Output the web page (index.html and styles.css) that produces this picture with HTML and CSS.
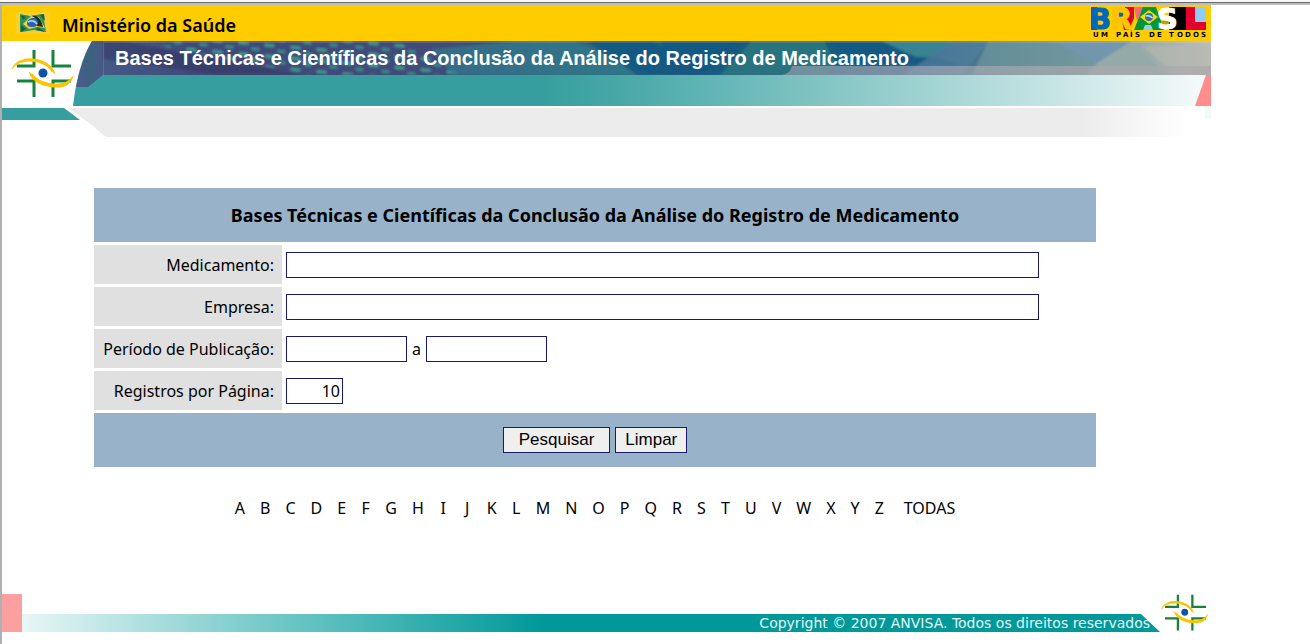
FILE: index.html
```html
<!DOCTYPE html>
<html lang="pt-BR">
<head>
<meta charset="utf-8">
<title>Bases Técnicas e Científicas</title>
<link rel="stylesheet" href="styles.css">
</head>
<body>
<div class="frame-edge"></div>
<div class="frame">
<div class="page">
  <header>
    <div class="ministry">
      <svg class="flag" viewBox="0 0 34 22" aria-hidden="true">
        <path fill="#f8d568" opacity=".4" d="M0 0h34v22H0z"/>
        <path fill="#2f9455" d="M4 2l10 2 13-2 2 12 1 6-12-2-12 2L4 20z"/>
        <path fill="#1d5f43" d="M5 3l5 2-3 3zM5 13l5 4-5 3zM24 3l4-1 1 7zM22 15l7 5-9-2z"/>
        <path fill="#f3d13d" d="M7 12l8-8 8 1 6 11-8-1-8 2z"/>
        <path fill="#1b2f22" d="M16 4c6-1 9 3 11 11l-6-1c1-5-1-8-5-10z"/>
        <path fill="#2862b0" d="M11 12c0-4 3-6 6-6s5 2 5 5-3 4-6 4-5-1-5-3z"/>
        <path fill="none" stroke="#a8cff0" stroke-width="1.6" d="M12 10c4-2 7-1 9 2"/>
      </svg>
      <span class="ministry-name">Ministério da Saúde</span>
      <svg class="brasil" viewBox="0 0 116 32" role="img" aria-label="Brasil, um país de todos">
        <path fill="#0067b9" d="M0 0h6v23H0zM26 1h9v11h-9z"/>
        <path fill="#e4002b" d="M34 0h9v11l-5 12h-5l-2-9h4z"/>
        <path fill="#f06a78" d="M43 0h10l-7 14z"/>
        <path fill="#000" d="M78 0h17v23H78z"/>
        <path fill="#8fcdf2" d="M52 16h10v7H52z"/>
        <g class="brasil-letters">
          <text x="-2" y="22" fill="#0067b9" stroke="#0067b9">B</text>
          <text x="19" y="22" fill="#ffc400" stroke="#ffc400">R</text>
        </g>
        <path fill="#e4002b" d="M95 0h9v23h-9zM95 15h20v8H95z"/>
        <path fill="#8fcdf2" d="M104 0h11v15h-11z"/>
        <path fill="#009739" d="M52 0h13l8 23H62l-2-5h-6l-2 5h-9z"/>
        <path fill="#ffd600" d="M49 10l9-7 9 7-9 7z"/>
        <circle cx="58" cy="10" r="4" fill="#2d6fb5"/>
        <path stroke="#c7e2f4" stroke-width="1.3" fill="none" d="M54.500 9q4-1 7 2"/>
        <path fill="#c49b00" d="M70 14h8v4h-8z"/>
        <text class="brasil-letters" x="66" y="22" fill="#fff" stroke="#fff">S</text>
        <text class="brasil-tag" x="2 10 25 32 39 44 58 66 78 86 94 102 110" y="30">UMPAÍSDETODOS</text>
      </svg>
    </div>
    <div class="banner">
      <svg class="banner-art" viewBox="0 0 1209 96" preserveAspectRatio="none" aria-hidden="true">
        <defs>
          <linearGradient id="photo" gradientUnits="userSpaceOnUse" x1="75" y1="0" x2="1209" y2="0">
            <stop offset="0" stop-color="#485e8a"/><stop offset=".1" stop-color="#3f4a78"/>
            <stop offset=".33" stop-color="#414b78"/><stop offset=".42" stop-color="#35617d"/>
            <stop offset=".5" stop-color="#26677e"/><stop offset=".75" stop-color="#2e6689"/>
            <stop offset=".85" stop-color="#648d99"/><stop offset="1" stop-color="#bdbdb5"/>
          </linearGradient>
          <linearGradient id="teal" gradientUnits="userSpaceOnUse" x1="540" y1="0" x2="1209" y2="0">
            <stop offset="0" stop-color="#369e9e"/><stop offset=".15" stop-color="#4eabab"/>
            <stop offset=".5" stop-color="#92cccb"/><stop offset=".75" stop-color="#c3e3e3"/>
            <stop offset="1" stop-color="#f7fbfb"/>
          </linearGradient>
          <linearGradient id="grey" gradientUnits="userSpaceOnUse" x1="1080" y1="0" x2="1185" y2="0">
            <stop offset="0" stop-color="#ececec"/><stop offset="1" stop-color="#fff"/>
          </linearGradient>
          <linearGradient id="haze" x1="0" y1="0" x2="1" y2="0">
            <stop offset="0" stop-color="#a9a9ba" stop-opacity=".55"/><stop offset="1" stop-color="#aaa" stop-opacity=".75"/>
          </linearGradient>
          <pattern id="dots" width="26" height="11" patternUnits="userSpaceOnUse" patternTransform="skewY(5)">
            <rect x="2" y="1" width="11" height="4" rx="2" fill="#3f9a8c"/>
            <rect x="15" y="6" width="9" height="4" rx="2" fill="#388a88"/>
          </pattern>
          <clipPath id="strip"><path d="M90 0h1119v34H101L86 46H74Q80 17 90 0z"/></clipPath>
          <filter id="soft"><feGaussianBlur stdDeviation="1"/></filter>
        </defs>
        <path fill="url(#teal)" d="M90 0h1119v65H71Q76 22 90 0z"/>
        <g clip-path="url(#strip)">
          <path fill="url(#photo)" d="M70 0h1139v50H70z"/>
          <g filter="url(#soft)">
            <path fill="url(#dots)" opacity=".9" d="M150 0h245l75 34H310L170 8z"/>
            <path fill="#333260" opacity=".5" d="M120 0l180 34h-80L101 18V0z"/>
            <path fill="#2f706d" opacity=".35" d="M82 14l10-10h4l-5 36-6 4z"/>
            <path fill="#2f7d8f" opacity=".65" d="M430 8l90-8h52l80 34H450z"/>
            <path fill="#135682" opacity=".8" d="M585 0h65l65 34h-80zM700 34l32-34h20l-34 34z"/>
            <path fill="#2c727e" d="M745 0h80l18 12-20 22H700z"/>
            <path fill="#135682" opacity=".8" d="M660 0h90l-32 34h-56zM822 0h65l70 24H835z"/>
            <path fill="#398291" d="M880 0h72l-22 15q-12 4-23-2z"/>
            <path fill="#537f9c" opacity=".7" d="M950 0h36l-25 34h-60z"/>
            <path fill="#6e959b" opacity=".7" d="M986 0h65l44 22-8 12H970z"/>
            <path fill="#7296ae" d="M1050 0h80l-35 22z"/>
            <path fill="#93aaa9" d="M1130 0l35 34h-80l10-12z"/>
            <path fill="#b6b9b3" opacity=".6" d="M1140 5h69v29h-34z"/>
          </g>
          <path fill="url(#haze)" d="M790 25h419v9H780q8-1 10-9z"/>
          <path fill="#ffffff" opacity=".12" d="M102 0h1107v2H102zM101 0h1v34h-1z"/>
        </g>
        <path fill="#ff8d8d" d="M1204 34h5v31h-16z"/>
        <path fill="url(#grey)" d="M66 67h1119v29H104Q96 90 90 84z"/>
        <path fill="#369e9e" d="M0 67h62l16 12H0z"/>
        <path fill="#f2faf8" d="M1203 65h6v12h-6z"/>
      </svg>
      <svg class="logo" viewBox="0 0 62 50" aria-hidden="true">
        <g id="anvisa-mark">
          <path fill="none" stroke="#16823c" stroke-width="3" d="M23 1v16H6M42 1v16h18M23 48V32H6M42 48V32h18"/>
          <path fill="#fdc300" stroke="#fdc300" stroke-width=".8" d="M1 20Q5 9 22 10Q40 12 44 25Q36 13 20 12Q6 12 1 20zM62 27Q59 40 42 38Q22 36 18 23Q28 34 43 35Q56 36 62 27z"/>
          <path fill="none" stroke="#fdc300" stroke-width="2.500" d="M13 11q21-2 29 12M20 25q9 12 29 12"/>
          <circle cx="32" cy="24" r="4.500" fill="#0b55a4"/>
        </g>
      </svg>
      <h1 class="banner-title">Bases Técnicas e Científicas da Conclusão da Análise do Registro de Medicamento</h1>
    </div>
  </header>
  <main>
    <form class="search">
      <h2 class="search-title">Bases Técnicas e Científicas da Conclusão da Análise do Registro de Medicamento</h2>
      <label class="name" for="med">Medicamento:</label>
      <div class="field"><input class="box long" id="med" type="text"></div>
      <label class="name" for="emp">Empresa:</label>
      <div class="field"><input class="box long" id="emp" type="text"></div>
      <label class="name" for="from">Período de Publicação:</label>
      <div class="field"><input class="box date" id="from" type="text"><label for="to">a</label><input class="box date" id="to" type="text"></div>
      <label class="name" for="per">Registros por Página:</label>
      <div class="field"><input class="box count" id="per" type="text" value="10"></div>
      <div class="actions"><button class="btn wide" type="submit">Pesquisar</button><button class="btn" type="reset">Limpar</button></div>
    </form>
    <nav class="letters" aria-label="Índice">
      <a href="#A">A</a><a href="#B">B</a><a href="#C">C</a><a href="#D">D</a><a href="#E">E</a><a href="#F">F</a><a href="#G">G</a><a href="#H">H</a><a href="#I">I</a><a href="#J">J</a><a href="#K">K</a><a href="#L">L</a><a href="#M">M</a><a href="#N">N</a><a href="#O">O</a><a href="#P">P</a><a href="#Q">Q</a><a href="#R">R</a><a href="#S">S</a><a href="#T">T</a><a href="#U">U</a><a href="#V">V</a><a href="#W">W</a><a href="#X">X</a><a href="#Y">Y</a><a href="#Z">Z</a><a class="all" href="#todas">TODAS</a>
    </nav>
  </main>
  <footer>
    <div class="foot-block"></div>
    <div class="foot-bar">Copyright © 2007 ANVISA. Todos os direitos reservados</div>
    <svg class="foot-logo" viewBox="0 0 62 50" aria-hidden="true"><use href="#anvisa-mark"/></svg>
  </footer>
</div>
</div>
</body>
</html>
```
FILE: styles.css
```css
* { box-sizing: border-box; }
body {
  margin: 0;
  background: #fff;
  color: #000;
  font: 16px/20px "Noto Sans", sans-serif;
}
.frame-edge {
  height: 5px;
  background: linear-gradient(#f8f8f8 2px, #6b6b6b 2px 3px, #bcbcbc 3px);
}
.frame {
  border-left: 2px solid #b0b0b0;
  min-height: calc(100vh - 5px);
}
.page { max-width: 1209px; }

.ministry {
  display: flex;
  align-items: center;
  height: 36px;
  padding: 0 4px 0 14px;
  background: #fc0;
}
.flag { width: 34px; height: 22px; }
.ministry-name {
  margin-left: 12px;
  font: 600 18px/24px "Noto Sans", sans-serif;
  padding-top: 3px;
}
.brasil { width: 116px; height: 32px; margin-left: auto; overflow: visible; }
.brasil-letters { font: bold 29px "DejaVu Sans", sans-serif; }
.brasil-tag { font: bold 7px "DejaVu Sans", sans-serif; }

.banner { display: grid; }
.banner > * { grid-area: 1 / 1; }
.banner-art { display: block; width: 100%; height: 96px; }
.logo { width: 62px; height: 50px; margin: 8px 0 0 9px; }
.banner-title {
  margin: 5px 0 0 113px;
  color: #fff;
  font: bold 20px/24px "Liberation Sans", Arial, sans-serif;
}

main { padding: 51px 115px 0 92px; }
.search {
  display: grid;
  grid-template-columns: 188px 1fr;
  gap: 3px;
}
.search-title, .actions {
  grid-column: 1 / -1;
  display: flex;
  align-items: center;
  justify-content: center;
  min-height: 54px;
  margin: 0;
  background: #98b3c9;
  font-size: 18px;
}
.actions { gap: 5px; }
.name {
  display: flex;
  align-items: center;
  justify-content: flex-end;
  min-height: 39px;
  padding-right: 8px;
  background: #e0e0e0;
}
.field { display: flex; align-items: center; gap: 5px; padding-left: 1px; }
.box {
  height: 26px;
  padding: 1px 2px;
  border: 1px solid #191970;
  border-radius: 0;
  background: #fff;
  font: inherit;
}
.long { width: 93%; }
.date { width: 121px; }
.count { width: 57px; text-align: right; }
.btn {
  height: 26px;
  padding: 0 9px;
  border: 1px solid #191970;
  border-radius: 0;
  background: #efefef;
  color: #000;
  font: 17px/20px "Liberation Sans", Arial, sans-serif;
}
.wide { padding: 0 15px; }

.letters {
  display: flex;
  flex-wrap: wrap;
  justify-content: center;
  gap: 15px;
  margin-top: 31px;
}
.letters a { min-width: 9px; color: #000; text-align: center; text-decoration: none; }
.letters .all { margin-left: 5px; }

footer { display: flex; align-items: flex-end; margin-top: 76px; }
.foot-block { width: 20px; height: 38px; background: #fc9f9f; }
.foot-bar {
  flex: 1;
  height: 18px;
  padding-right: 10px;
  background: linear-gradient(90deg, #e8f6f6, #77caca 240px, #099 520px);
  clip-path: polygon(0 0, calc(100% - 19px) 0, 100% 100%, 0 100%);
  color: #e6f5f5;
  font: 14px/18px "DejaVu Sans", Verdana, sans-serif;
  text-align: right;
}
.foot-logo { width: 48px; height: 38px; margin-right: 3px; }
```
